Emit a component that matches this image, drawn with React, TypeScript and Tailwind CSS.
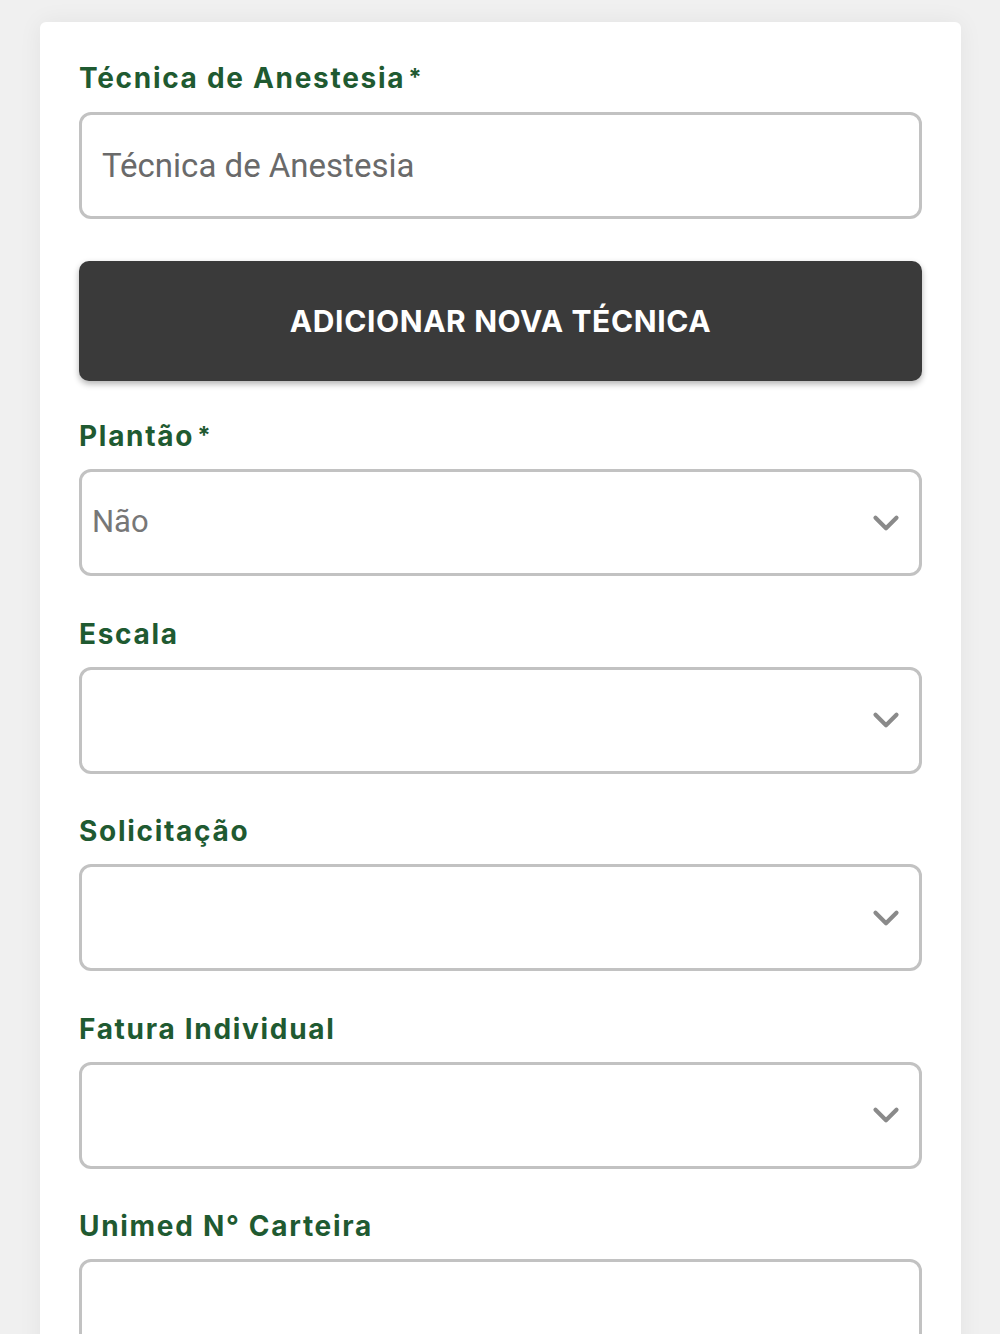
import { ChevronDown } from 'lucide-react';

const SELECTS: { label: string; value?: string; required?: boolean }[] = [
  { label: 'Plantão', value: 'Não', required: true },
  { label: 'Escala' },
  { label: 'Solicitação' },
  { label: 'Fatura Individual' },
];

function Label({ text, required }: { text: string; required?: boolean }) {
  return (
    <div className="h-[36px] flex items-center text-[28px] font-bold text-[#1f5a31] tracking-[1.7px] font-['Inter',sans-serif] leading-none">
      {text}
      {required && <span className="ml-[3px] text-[24px]">*</span>}
    </div>
  );
}

export default function App() {
  return (
    <div className="h-[1334px] overflow-hidden bg-[#f0f0f0] pt-[22px] pl-[40px] pr-[39px]">
      <div className="bg-white rounded-[6px] shadow-[0_0_24px_rgba(0,0,0,0.06)] px-[39px] pt-[38px] pb-[40px] h-[1400px]">
        <Label text="Técnica de Anestesia" required />
        <div className="mt-[16px] h-[107px] border-[3px] border-[#c2c2c2] rounded-[12px] flex items-center px-[20px]">
          <span className="text-[33px] text-[#6a6a6a] font-['Roboto',sans-serif]">Técnica de Anestesia</span>
        </div>

        <button className="mt-[42px] w-full h-[120px] bg-[#3a3a3a] rounded-[10px] shadow-[0_3px_6px_rgba(0,0,0,0.3)] text-white text-[30px] font-bold tracking-[0.6px] font-['Inter',sans-serif]">
          ADICIONAR NOVA TÉCNICA
        </button>

        {SELECTS.map((s, i) => (
          <div key={s.label} className={i === 0 ? 'mt-[37px]' : 'mt-[39.5px]'}>
            <Label text={s.label} required={s.required} />
            <div className="mt-[15px] h-[107px] border-[3px] border-[#c2c2c2] rounded-[12px] flex items-center justify-between pl-[10px] pr-[12px]">
              <span className="text-[31px] text-[#777777] font-['Roboto',sans-serif]">{s.value ?? ''}</span>
              <ChevronDown size={42} strokeWidth={2.4} className="text-[#8a8a8a]" />
            </div>
          </div>
        ))}

        <div className="mt-[39.5px]">
          <Label text="Unimed N° Carteira" />
          <div className="mt-[15px] h-[107px] border-[3px] border-[#c2c2c2] rounded-[12px]" />
        </div>
      </div>
    </div>
  );
}
